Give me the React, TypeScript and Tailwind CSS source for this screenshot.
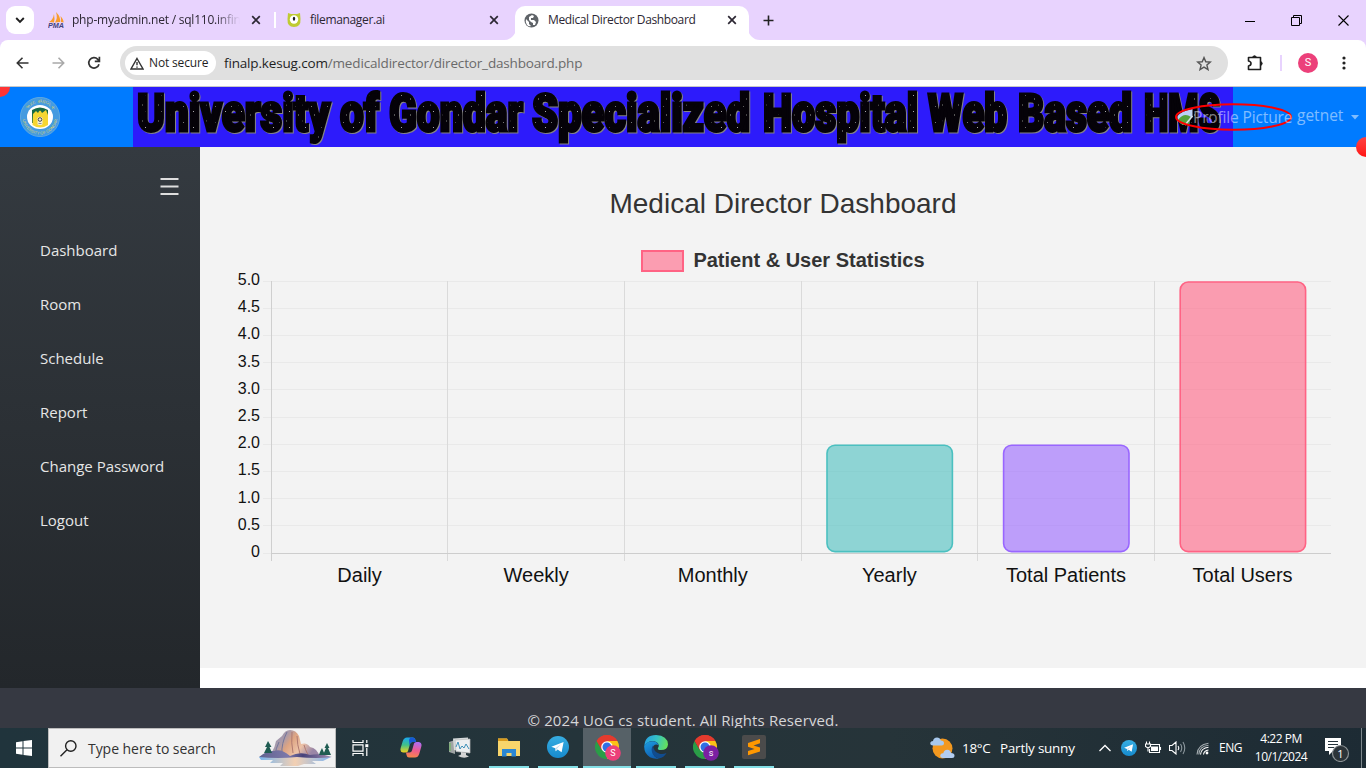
import React from 'react';

const ui = "font-['Open_Sans','Noto_Sans',sans-serif]";

function ChromeLogo({ badge, label }: { badge: string; label: string }) {
  return (
    <svg width="26" height="28" viewBox="0 0 26 28">
      <g>
        <path d="M12 12 L1.6 6 A12 12 0 0 1 22.4 6 Z" fill="#e33b2e" />
        <path d="M1.6 6 A12 12 0 0 0 12 24 L17.2 15 L6.8 15 Z" fill="#2a9d47" />
        <path d="M22.4 6 A12 12 0 0 1 12 24 L17.2 15 L12 6 Z" fill="#fbc116" />
        <path d="M12 6 H22.4 A12 12 0 0 0 1.6 6 L6.8 15 Z" fill="#e33b2e" />
        <circle cx="12" cy="12" r="5.8" fill="#fff" />
        <circle cx="12" cy="12" r="4.5" fill="#2f6fe4" />
      </g>
      <circle cx="18" cy="18" r="7.8" fill={badge} />
      <text x="18" y="21.3" fontSize="9" fontFamily="Roboto, sans-serif" fill="#fff" textAnchor="middle">{label}</text>
    </svg>
  );
}

function TelegramLogo({ size }: { size: number }) {
  return (
    <svg width={size} height={size} viewBox="0 0 22 22">
      <defs>
        <linearGradient id="tg" x1="0" y1="0" x2="0" y2="1">
          <stop offset="0" stopColor="#37aee2" />
          <stop offset="1" stopColor="#168acd" />
        </linearGradient>
      </defs>
      <circle cx="11" cy="11" r="11" fill="url(#tg)" />
      <path d="M4.3 10.8 L16.6 6 L14.6 16.2 L10.6 13.4 L8.7 15.2 L8.3 12.3 Z" fill="#fff" />
      <path d="M8.3 12.3 L14 8.2 L9.7 12.9 L8.7 15.2 Z" fill="#c3dcec" />
    </svg>
  );
}

function Close() {
  return (
    <svg width="10" height="10" viewBox="0 0 10 10" stroke="#2c2733" strokeWidth="1.7">
      <path d="M1.2 1.2 L8.8 8.8 M8.8 1.2 L1.2 8.8" />
    </svg>
  );
}

function TabStrip() {
  return (
    <div className="relative flex h-10 items-center bg-[#e8d3fe] text-[12px] text-[#2c2733]">
      <div className="ml-1.5 flex h-7 w-7 items-center justify-center rounded-[9px] bg-white">
        <svg width="10" height="8" viewBox="0 0 10 8" fill="none" stroke="#1f1f1f" strokeWidth="1.9"><path d="M1.2 2 L5 5.8 L8.800 2" /></svg>
      </div>
      <svg className="ml-3.5 shrink-0" width="17" height="17" viewBox="0 0 17 17">
        <path d="M1 10 Q5 8 6 2 Q7 7 6 10.5 Z M7 10.5 Q10 6 8 0 Q13 5 12 10 Z M12.8 10 Q13.5 7 12.5 4 Q16 8 15.5 10.5 Z" fill="#f89c2c" />
        <text x="0" y="16" fontSize="6.5" fontWeight="bold" fontStyle="italic" fontFamily="Liberation Sans, sans-serif" fill="#42427c" textLength="16" lengthAdjust="spacingAndGlyphs">PMA</text>
      </svg>
      <div className="ml-[7px] w-[168px] overflow-hidden whitespace-nowrap tracking-[-0.22px] [mask-image:linear-gradient(to_right,black_85%,transparent)]">php-myadmin.net / sql110.infin</div>
      <div className="ml-[11px]"><Close /></div>
      <div className="ml-[13px] h-4 w-[2px] bg-white" />
      <svg className="ml-[10px] shrink-0" width="16" height="16" viewBox="0 0 16 16">
        <path d="M2 1 L5 2 H11 L14 1 L14.5 7 Q15 15 8 15 Q1 15 1.5 7 Z" fill="#bfcb32" />
        <circle cx="8" cy="7.5" r="4.2" fill="#fff" />
        <ellipse cx="8" cy="6.8" rx="1.2" ry="2" fill="#222" />
      </svg>
      <div className="ml-2 w-[168px] tracking-[-0.35px]">filemanager.ai</div>
      <div className="ml-[11px]"><Close /></div>
      <svg className="ml-[5px] self-end" width="12" height="12"><path d="M12 0 A12 12 0 0 1 0 12 H12 Z" fill="#fff" /></svg>
      <div className="-mx-px flex h-[34px] w-[234px] items-center self-end rounded-t-[10px] bg-white pb-[6px]">
        <svg className="ml-[9px]" width="15" height="15" viewBox="0 0 15 15">
          <circle cx="7.5" cy="7.5" r="7" fill="#5f6368" />
          <path d="M2 6 L5 9 V11 L7 13 Q5 14 3 12 Q1 9 2 6 Z M5 4 L8 2 L10 3 L9 5 H7 V7 H10 L12 9 L11 12 L9 12 L9 10 L7 9 L5 7 Z" fill="#fff" />
        </svg>
        <div className="ml-[9px] w-[168px] whitespace-nowrap tracking-[-0.37px]">Medical Director Dashboard</div>
        <div className="ml-[11px]"><Close /></div>
      </div>
      <svg className="self-end" width="12" height="12"><path d="M0 0 A12 12 0 0 0 12 12 H0 Z" fill="#fff" /></svg>
      <svg className="ml-[3px]" width="11" height="11" viewBox="0 0 11 11" stroke="#222" strokeWidth="1.6"><path d="M5.5 0.5 V10.5 M0.5 5.5 H10.5" /></svg>
      <div className="ml-auto flex items-center gap-9 pr-[17px]">
        <svg width="10" height="11" stroke="#000"><path d="M0 6.5 H10" /></svg>
        <svg width="11" height="11" fill="none" stroke="#000"><path d="M0.5 2.5 H8.5 V10.5 H0.5 Z M2.5 2.5 V0.5 H10.5 V8.5 H8.5" /></svg>
        <svg width="11" height="11" stroke="#000" strokeWidth="1.1"><path d="M0.5 0.5 L10.5 10.5 M10.5 0.5 L0.5 10.5" /></svg>
      </div>
    </div>
  );
}

function Toolbar() {
  return (
    <div className="bg-[#e8d3fe]">
      <div className="flex h-[47px] items-center rounded-t-[8px] border-b border-[#c8c8c8] bg-white">
        <svg className="ml-4" width="13" height="12" viewBox="0 0 13 12" fill="none" stroke="#333" strokeWidth="1.6"><path d="M12.5 6 H1.5 M6.5 0.8 L1.3 6 L6.5 11.2" /></svg>
        <svg className="ml-[23px]" width="13" height="12" viewBox="0 0 13 12" fill="none" stroke="#a9a9a9" strokeWidth="1.6"><path d="M0.5 6 H11.5 M6.5 0.8 L11.7 6 L6.5 11.2" /></svg>
        <svg className="ml-[22px]" width="14" height="14" viewBox="0 0 14 14" fill="none" stroke="#333" strokeWidth="1.7"><path d="M12 8.2 A5.2 5.2 0 1 1 10.8 3.3 L12.6 5.1 M12.4 0.8 V5.4 H7.8" /></svg>
        <div className="ml-[19px] flex h-[34px] w-[1108px] items-center rounded-full bg-[#e0e0e0]">
          <div className="ml-[5px] flex h-6 w-[91px] items-center rounded-full bg-white">
            <svg className="ml-[5px]" width="14" height="13" viewBox="0 0 14 13" fill="none" stroke="#333" strokeWidth="1.4"><path d="M7 1.5 L13 12 H1 Z M7 5 V8.3 M7 9.4 V10.8" /></svg>
            <span className="ml-[5px] whitespace-nowrap text-[12px] tracking-[-0.15px] text-[#1f1f1f]">Not secure</span>
          </div>
          <div className="ml-2 whitespace-nowrap text-[13.5px] tracking-[-0.16px] text-[#1f1f1f]">finalp.kesug.com<span className="text-[#6a6a6a]">/medicaldirector/director_dashboard.php</span></div>
          <svg className="ml-auto mr-4" width="16" height="15" viewBox="0 0 16 15" fill="none" stroke="#555" strokeWidth="1.4"><path d="M8 1.6 L9.8 5.8 L14.3 6.1 L10.9 9.1 L12 13.6 L8 11.1 L4 13.6 L5.1 9.1 L1.7 6.1 L6.2 5.8 Z" /></svg>
        </div>
        <svg className="ml-[19px]" width="17" height="18" viewBox="0 0 17 18" fill="none" stroke="#1f1f1f" strokeWidth="1.6"><path d="M1.5 3.5 H13.5 V15.500 H1.5 V12 Q4 11.5 4 9.5 Q4 7.5 1.5 7 Z" strokeLinejoin="round" /><path d="M5.8 3 A1.8 1.8 0 0 1 9.2 3 Z M14 7.8 A1.8 1.8 0 0 1 14 11.2 Z" fill="#1f1f1f" strokeWidth="1" /></svg>
        <div className="ml-[16px] h-4 w-[2px] bg-[#e8d3fe]" />
        <div className="ml-4 flex h-5 w-5 items-center justify-center rounded-full bg-[#ec407a] font-[Roboto,sans-serif] text-[11px] text-white">S</div>
        <svg className="ml-[24px]" width="4" height="14" fill="#222"><circle cx="2" cy="2" r="1.6" /><circle cx="2" cy="7" r="1.6" /><circle cx="2" cy="12" r="1.6" /></svg>
      </div>
    </div>
  );
}

const bannerWords: [string, number, number][] = [
  ['University', 4, 193],
  ['of', 207, 39],
  ['Gondar', 256, 134],
  ['Specialized', 399, 218],
  ['Hospital', 630, 155],
  ['Web', 795, 79],
  ['Based', 885, 114],
  ['HMS', 1011, 76],
];

function Banner() {
  return (
    <svg className="block shrink-0" width="1100" height="60" viewBox="0 0 1100 60">
      <defs>
        <pattern id="stars" width="16" height="16" patternUnits="userSpaceOnUse">
          <rect width="16" height="16" fill="#050208" />
          <rect x="2" y="3" width="1" height="1" fill="#777" />
          <rect x="9" y="1" width="1" height="2" fill="#444" />
          <rect x="12" y="8" width="1" height="1" fill="#aaa" />
          <rect x="5" y="11" width="1" height="2" fill="#555" />
        </pattern>
      </defs>
      <rect width="1100" height="60" fill="#2d1bfb" />
      <g className="drop-shadow-[1.5px_1.5px_0_#858585]" fontFamily="Roboto, sans-serif" fontWeight="900" fontSize="51" fill="url(#stars)" stroke="#050208" strokeWidth="3">
        {bannerWords.map(([word, x, width]) => (
          <text key={word} x={x} y="43.500" textLength={width} lengthAdjust="spacingAndGlyphs">{word}</text>
        ))}
      </g>
    </svg>
  );
}

function Crest() {
  return (
    <svg className="ml-5" width="40" height="40" viewBox="0 0 40 40">
      <defs>
        <path id="crestTop" d="M5.5 20 A14.5 14.5 0 0 1 34.5 20" />
        <path id="crestBottom" d="M2.500 20 A17.500 17.500 0 0 0 37.500 20" />
      </defs>
      <circle cx="20" cy="20" r="19.6" fill="#459be0" stroke="#79b4d8" strokeWidth="0.7" />
      <g fill="#d3cf78" fontSize="4.8" fontFamily="Liberation Sans, sans-serif">
        <text textAnchor="middle"><textPath href="#crestTop" startOffset="50%">ጎንደር ዩኒቨርሲቲ</textPath></text>
        <text textAnchor="middle" fontSize="4"><textPath href="#crestBottom" startOffset="50%">UNIVERSITY OF GONDAR</textPath></text>
      </g>
      <ellipse cx="20" cy="20" rx="13" ry="12" fill="#fff" />
      <path d="M12 13 Q20 8 28 13 V26 H12 Z" fill="#176a45" />
      <path d="M13 17 L16 14 L18 16 Q20 11 22 16 L26 13 L28 18 V28 Q20 33 12.500 28 Z" fill="#f6d632" />
      <rect x="17.500" y="20" width="5" height="8" rx="1.500" fill="#f5efd5" />
      <circle cx="20" cy="22.500" r="1.800" fill="none" stroke="#444" strokeWidth="1" />
      <path d="M18.500 26.500 H21.500" stroke="#777" strokeWidth="0.800" />
    </svg>
  );
}

function Navbar() {
  return (
    <header className="relative flex h-[60px] items-center bg-[#007bff]">
      <div className="w-[133px] shrink-0"><Crest /></div>
      <Banner />
      <div className="absolute left-0 top-0 h-[10px] w-[10px] rounded-br-full bg-[#ff3434]" />
      <div className="absolute right-0 top-[50px] z-10 h-5 w-[10px] rounded-l-full bg-linear-to-b from-[#ff4040] to-[#ff1010]" />
      <div className="absolute right-[7px] top-4 flex items-center text-white/50">
        <div className="relative mr-[5px] h-[28px] w-[117px]">
          <svg className="absolute inset-0" width="117" height="28" viewBox="0 0 117 28">
            <path d="M2.5 13 Q6 8 17.5 6 V14 L8 22 Q3 19 2.5 15 Z" fill="#bcd0f5" />
            <path d="M3 17 Q9 9 16 14 L14 22 H8 Q4 20 3 17 Z" fill="#55a33b" />
            <path d="M10 22 L17.5 13" stroke="#d8deea" strokeWidth="1.5" />
            <ellipse cx="58.5" cy="14" rx="57.5" ry="12.8" fill="none" stroke="#f00" strokeWidth="2" />
          </svg>
          <span className="absolute left-[18px] top-[3px] whitespace-nowrap text-[15.5px] tracking-[-0.15px]">Profile Picture</span>
        </div>
        <span className="-mt-[3px] w-[54px] whitespace-nowrap text-[15.5px]">getnet</span>
        <svg width="8" height="5"><path d="M0 0 H8 L4 4.5 Z" fill="#80bdff" /></svg>
      </div>
    </header>
  );
}

function Sidebar() {
  return (
    <aside className="flex w-[200px] shrink-0 flex-col bg-linear-to-b from-[#343a40] to-[#23272b]">
      <svg className="ml-[160px] mt-[30px]" width="19" height="18" stroke="#dedede" strokeWidth="2"><path d="M0.5 2 H18.5 M0.5 9.5 H18.5 M0.5 17 H18.5" /></svg>
      <nav className="mt-[28px] flex flex-col pl-10 text-[15px] text-[#e6e6e6]">
        {['Dashboard', 'Room', 'Schedule', 'Report', 'Change Password', 'Logout'].map((item) => (
          <a key={item} className="flex h-[54px] items-center whitespace-nowrap">{item}</a>
        ))}
      </nav>
    </aside>
  );
}

const categories = [
  { name: 'Daily', value: 0, rgb: '255,99,132' },
  { name: 'Weekly', value: 0, rgb: '54,162,235' },
  { name: 'Monthly', value: 0, rgb: '255,206,86' },
  { name: 'Yearly', value: 2, rgb: '75,192,192' },
  { name: 'Total Patients', value: 2, rgb: '153,102,255' },
  { name: 'Total Users', value: 5, rgb: '255,99,132' },
];
const tickLines = [0.5, 27.5, 54.5, 81.5, 108.5, 136.5, 163.5, 190.5, 217.5, 244.5];
const columnLines = [41.5, 217.5, 394.5, 571.5, 747.5, 924.5];

function Chart() {
  return (
    <svg className="ml-[30px] block overflow-visible" width="1110" height="320" viewBox="0 0 1110 320" fontFamily="Liberation Sans, Arial, sans-serif">
      {tickLines.map((y) => <path key={y} d={`M33 ${y} H1101`} stroke="#e9e9e9" />)}
      <path d="M33 272.5 H41" stroke="#e9e9e9" />
      {columnLines.map((x, i) => <path key={x} d={`M${x} 0 V280`} stroke={i ? '#dadada' : '#cfcfcf'} />)}
      <path d="M41 272.5 H1101" stroke="#cdcdcd" />
      {['5.0', '4.5', '4.0', '3.5', '3.0', '2.5', '2.0', '1.5', '1.0', '0.5', '0'].map((t, i) => (
        <text key={t} x="30" y={4 + i * 27.2} textAnchor="end" fontSize="16" fill="#111">{t}</text>
      ))}
      {categories.map((c, i) => {
        const x = 41.5 + i * 176.6 + 24.7;
        const top = 272 - c.value * 54.4;
        return (
          <g key={c.name}>
            {c.value > 0 && (
              <rect x={x + 1} y={top + 1} width="125.4" height={c.value * 54.4 - 2.4} rx="8" fill={`rgba(${c.rgb},0.6)`} stroke={`rgb(${c.rgb})`} strokeWidth="1.6" />
            )}
            <text x={x + 63.4} y="301" textAnchor="middle" fontSize="20" fill="#111">{c.name}</text>
          </g>
        );
      })}
    </svg>
  );
}

function Main() {
  return (
    <main className="flex-1 bg-white font-['Liberation_Sans',Arial,sans-serif]">
      <div className="h-[521px] overflow-hidden bg-[#f3f3f3]">
        <h1 className="mt-10 text-center text-[28px] leading-[34px] text-[#333]">Medical Director Dashboard</h1>
        <div className="mt-[26px] flex h-[26px] items-center justify-center gap-[9px] text-[20px] font-bold leading-[26px] text-[#333]">
          <div className="mt-px h-[22px] w-[43px] border-2 border-[#ff6384] bg-[#fb9db1]" />
          <span>Patient &amp; User Statistics</span>
        </div>
        <div className="mt-2"><Chart /></div>
      </div>
    </main>
  );
}

function Slot({ children, running, active }: { children: React.ReactNode; running?: boolean; active?: boolean }) {
  return (
    <div className="flex h-10 w-[49px] shrink-0 flex-col items-center">
      <div className={`flex h-[38px] items-center justify-center ${active ? 'w-12 bg-[#566167]' : 'w-10'}`}>{children}</div>
      {running && <div className={`h-[2px] bg-[#83dfe6] ${active ? 'w-12' : 'w-10'}`} />}
    </div>
  );
}

function SearchArt() {
  return (
    <svg className="ml-auto mr-[2px]" width="75" height="38" viewBox="0 0 75 38">
      <defs>
        <linearGradient id="rock" x1="0" y1="0" x2="1" y2="0.4"><stop offset="0" stopColor="#8f92b4" /><stop offset="0.35" stopColor="#a99aa9" /><stop offset="0.5" stopColor="#dda482" /><stop offset="0.75" stopColor="#edc3a8" /><stop offset="1" stopColor="#9a86a6" /></linearGradient>
        <linearGradient id="lake" x1="0" y1="0" x2="1" y2="0"><stop offset="0" stopColor="#78b5ee" /><stop offset="0.5" stopColor="#f3d0b3" /><stop offset="1" stopColor="#7fb4ef" /></linearGradient>
        <linearGradient id="shore" x1="0" y1="0" x2="1" y2="0"><stop offset="0" stopColor="#5f628f" /><stop offset="0.4" stopColor="#7d79aa" /><stop offset="0.6" stopColor="#46427a" /><stop offset="1" stopColor="#a08cae" /></linearGradient>
      </defs>
      <path d="M1 28 H73 L65 32 H54 L58 35 H46 L40 37 H22 L25 34 H12 L15 31 H3 Z" fill="url(#lake)" />
      <path d="M14 23 Q17 18 18 12 L24 7 Q27 1 32 1 Q38 1 41 7 L43 15 Q49 13 52 18 Q59 19 62 28 H12 Z" fill="url(#rock)" />
      <path d="M34 3 Q33 14 35 24 M39 7 Q39 15 42 25 M46 16 Q47 20 50 26" stroke="#b07a70" fill="none" strokeWidth="1" />
      <path d="M29 3 Q23 15 24 25 M21 13 Q18 19 17 26" stroke="#73769b" fill="none" strokeWidth="1" />
      <path d="M1 28 Q9 21 16 22 Q23 19 32 27 Q42 22 52 26 Q63 24 74 28 Q60 30 39 28 Q20 30 1 28 Z" fill="url(#shore)" />
      <path d="M10 12 L7 18 H9 L6 24 H14 L11.500 18 H13.500 Z M69 14 L66.500 19 H68 L65 26 H73 L70 19 H71.500 Z M64 19 L62 23 L61 26 H67 Z" fill="#1f5c52" />
    </svg>
  );
}

function Taskbar() {
  return (
    <div className="flex h-10 items-center bg-linear-to-r from-[#20343c] via-[#263439] via-65% to-[#1d2b34] text-white">
      <div className="flex w-12 shrink-0 justify-center">
        <svg width="16" height="16" fill="#fff"><path d="M0 2.300 L6.500 1.300 V7.500 H0 Z M7.500 1.100 L16 0 V7.500 H7.500 Z M0 8.500 H6.500 V14.700 L0 13.700 Z M7.500 8.500 H16 V16 L7.500 14.900 Z" /></svg>
      </div>
      <div className="flex h-10 w-72 shrink-0 items-center border border-[#bcbcbc] bg-[#f1f1f1]">
        <svg className="ml-[11px]" width="17" height="17" fill="none" stroke="#222" strokeWidth="1.4"><circle cx="10.800" cy="6" r="5.200" /><path d="M7 9.800 L0.500 16.300" /></svg>
        <span className="ml-[11px] whitespace-nowrap text-[14px] tracking-[-0.05px] text-[#333]">Type here to search</span>
        <SearchArt />
      </div>
      <div className="flex w-12 shrink-0 justify-center">
        <svg width="17" height="16" fill="none" stroke="#fff" strokeWidth="1.200"><path d="M1 0 V2.500 H11 V0 M1 16 V13.500 H11 V16 M1 4.800 H11 V11.200 H1 Z M14.800 0 V3 M14.800 8 V16" /><path d="M13.300 4.200 h3 v3 h-3 z" fill="#fff" stroke="none" /></svg>
      </div>
      <div className="ml-[2px] flex">
        <Slot>
          <svg width="22" height="21" viewBox="0 0 22 21">
            <defs>
              <linearGradient id="cpA" x1="0" y1="0" x2="0" y2="1"><stop offset="0" stopColor="#1aa7f0" /><stop offset="0.5" stopColor="#40c088" /><stop offset="1" stopColor="#f4d21c" /></linearGradient>
              <linearGradient id="cpB" x1="0.500" y1="0" x2="0.300" y2="1"><stop offset="0" stopColor="#b06cf0" /><stop offset="0.500" stopColor="#ef5b8e" /><stop offset="1" stopColor="#f98847" /></linearGradient>
            </defs>
            <path d="M7 0.500 H13 Q15 0.500 15.500 3 L16 5 H12.500 Q10.500 5 10 7 L8 14 Q7.500 15.500 5.500 15.500 H3 Q-0.500 15 0.800 10.500 L2.800 4 Q4 0.500 7 0.500 Z" fill="url(#cpA)" />
            <path d="M13 0.500 Q15 0.500 15.500 3 L16 5 H12.500 Q10.500 5 10 7 L9.500 9 L9 3 Q9.500 0.500 11 0.500 Z" fill="#1658d5" />
            <path d="M15 20.500 H9 Q7 20.500 6.500 18 L6 15.500 H9.500 Q11.500 15.500 12 13.500 L14 6.500 Q14.500 5 16.500 5 H19 Q22.500 5.500 21.200 10 L19.200 17 Q18 20.500 15 20.500 Z" fill="url(#cpB)" />
          </svg>
        </Slot>
        <Slot>
          <svg width="23" height="21" viewBox="0 0 23 21">
            <path d="M1 5 L7 3 V17 L1 15 Z" fill="#9fa4a4" /><path d="M2 6 V14" stroke="#66bb55" />
            <path d="M5 1.500 L20 0.500 V14 L6 13 Z" fill="#d8dcdd" />
            <path d="M7 3 L22 2 V16 L8 14.500 Z" fill="#eceff0" stroke="#bcbcbc" strokeWidth="0.700" />
            <path d="M8 10 L10 5 L12 12 L14 9 L16 11 L18 7 L21 12" stroke="#3e90b8" fill="none" />
            <path d="M13 15 L18 16 V18 L21 19.500 Q16 22 10 19 L13 17.500 Z" fill="#d4d4d4" />
          </svg>
        </Slot>
        <Slot running>
          <svg width="22" height="19" viewBox="0 0 22 19"><path d="M0 0.500 H9 L10.500 3 H22 V18 H0 Z" fill="#f8d56b" /><path d="M0 0.500 H9 L10 3 H0 Z" fill="#d99a1c" /><path d="M4 18.500 V11 H18 V18.500 H13.500 V15 H8.500 V18.500 Z" fill="#2b87d3" /></svg>
        </Slot>
        <Slot running><TelegramLogo size={22} /></Slot>
        <Slot running active><div className="ml-[2px] mt-[3px]"><ChromeLogo badge="#ec407a" label="S" /></div></Slot>
        <Slot running>
          <svg width="24" height="24" viewBox="0 0 24 24">
            <defs>
              <linearGradient id="edA" x1="0" y1="0.300" x2="1" y2="0.500"><stop offset="0" stopColor="#279fe2" /><stop offset="0.500" stopColor="#35c3c4" /><stop offset="1" stopColor="#66e05a" /></linearGradient>
              <linearGradient id="edB" x1="0" y1="0" x2="0.400" y2="1"><stop offset="0" stopColor="#1c9de0" /><stop offset="1" stopColor="#1061b4" /></linearGradient>
            </defs>
            <path d="M0.300 11 Q1 0 12 0 Q23.500 0.500 24 9.500 Q23.500 15 17 15 Q13 15 14 13 Q16 10 13 7.500 Q6 3.500 0.300 11 Z" fill="url(#edA)" />
            <path d="M0.200 11 Q3 6 9 6.300 Q13 6.500 14.500 10 Q10 8 8.500 13 Q8 22 15 23.500 Q6 25 1.500 17.500 Q0 14 0.200 11 Z" fill="url(#edB)" />
            <path d="M9 10.500 Q6.500 14 8.500 18.500 Q10.500 22.500 15 23.500 Q20 22.500 22.500 18 Q19 19.500 15.500 18.700 Q9.500 17 9 10.500 Z" fill="#114c8f" />
          </svg>
        </Slot>
        <Slot running><div className="ml-[2px] mt-[3px]"><ChromeLogo badge="#7b1fa2" label="s" /></div></Slot>
        <Slot running>
          <svg width="24" height="24" viewBox="0 0 24 24"><rect width="24" height="24" rx="2" fill="#4b4b4b" /><path d="M6 8 L18 4 V8.300 L11.500 10.500 L18 12.600 V16.500 L6 20.300 V16 L12.500 14 L6 11.800 Z" fill="#ff9800" /></svg>
        </Slot>
      </div>
      <svg className="ml-[152px] shrink-0" width="25" height="24" viewBox="0 0 25 24">
        <circle cx="12.500" cy="12.500" r="10" fill="#f3981f" />
        <path d="M3 9.500 Q0 9.500 0.300 6.800 Q0.700 5 3 5 Q3.500 1.500 7 1.500 Q10 1.500 10.800 4.500 Q14 4.500 14 7 Q14 9.500 11.500 9.500 Z" fill="#a8c8ed" />
        <path d="M13 22 Q10 22 10.300 19.300 Q10.700 17 13.300 17.300 Q14 13.500 17.500 13.700 Q20.500 14 21 17 Q24.500 17 24.500 19.500 Q24.500 22 22 22 Z" fill="#b3cdf1" />
      </svg>
      <span className="ml-[7px] w-[38px] shrink-0 text-[13.500px] tracking-[-0.300px]">18°C</span>
      <span className="w-[91px] shrink-0 whitespace-nowrap text-[13.500px] tracking-[-0.250px]">Partly sunny</span>
      <svg className="ml-[8px] shrink-0" width="12" height="8" fill="none" stroke="#fff" strokeWidth="1.300"><path d="M0.500 7 L6 1.500 L11.500 7" /></svg>
      <div className="ml-[10px] shrink-0"><TelegramLogo size={16} /></div>
      <svg className="ml-[8px] shrink-0" width="17" height="14" fill="none" stroke="#fff" strokeWidth="1.100"><path d="M6 3.500 H14.500 V11.500 H4.500 V8 M15.500 6 V9" /><path d="M6 5.500 H13 V10 H6 Z" fill="#fff" stroke="none" /><path d="M1.500 0.500 V3 M4.500 0.500 V3 M0.500 3 H5.500 V5.500 L3 7 L0.500 5.500 Z M3 7 V10.500" /></svg>
      <svg className="ml-[7px] shrink-0" width="17" height="14" fill="none" stroke="#fff" strokeWidth="1.100"><path d="M0.500 4.500 H3 L7 1 V13 L3 9.500 H0.500 Z M9 5 Q10.500 7 9 9" /><path d="M11.500 3 Q14 7 11.500 11 M14 1 Q17.500 7 14 13" stroke="#8c979d" /></svg>
      <svg className="ml-[10px] shrink-0" width="13" height="13" fill="none" stroke="#fff" strokeWidth="1.100"><path d="M7.500 12.500 Q8 8.500 12.500 8 M4.500 12.500 Q5 6 12.500 5.200" /><path d="M1 12.500 Q1.500 2.500 12.500 1.200 M2.800 12.500 Q3.500 4 12.500 3.200" stroke="#a5adb1" /><circle cx="11" cy="11" r="1.400" fill="#fff" stroke="none" /></svg>
      <span className="ml-[10px] w-[24px] shrink-0 text-[12px] tracking-[-0.500px]">ENG</span>
      <div className="ml-[10px] w-[56px] shrink-0 whitespace-nowrap text-center text-[12px] leading-[18px] tracking-[-0.500px]">4:22 PM<br />10/1/2024</div>
      <svg className="ml-[15px] shrink-0" width="27" height="27" viewBox="0 0 27 27">
        <path d="M1 3 H17 V16 H9 L5 20 V16 H1 Z" fill="#fff" /><path d="M4 6.500 H14 M4 9.500 H14 M4 12.500 H10" stroke="#26343b" />
        <circle cx="16.500" cy="18.500" r="8" fill="#2c3439" stroke="#8c9295" strokeWidth="1.200" />
        <text x="16.500" y="22.500" textAnchor="middle" fontSize="11" fontFamily="Open Sans, sans-serif" fill="#fff">1</text>
      </svg>
      <div className="ml-auto mr-1 h-10 w-px shrink-0 bg-[#7d878c]" />
    </div>
  );
}

export default function App() {
  return (
    <div className={`h-[768px] w-[1366px] overflow-hidden bg-white ${ui}`}>
      <TabStrip />
      <Toolbar />
      <Navbar />
      <div className="flex h-[541px]">
        <Sidebar />
        <Main />
      </div>
      <footer className="h-10 overflow-hidden bg-[#363942] pt-5 text-center text-[15px] leading-6 tracking-[0.13px] text-[#d5d6d8]">© 2024 UoG cs student. All Rights Reserved.</footer>
      <Taskbar />
    </div>
  );
}
